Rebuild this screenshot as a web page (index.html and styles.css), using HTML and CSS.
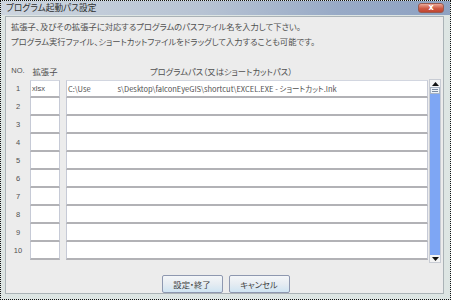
FILE: index.html
```html
<!DOCTYPE html>
<html lang="ja">
<head>
<meta charset="utf-8">
<title>プログラム起動パス設定</title>
<link rel="stylesheet" href="styles.css">
</head>
<body>
<div class="window">
  <div class="titlebar">
    <span class="title">プログラム起動パス設定</span>
    <span class="close">x</span>
  </div>
  <div class="frame">
    <div class="content">
      <p class="desc">拡張子、及びその拡張子に対応するプログラムのパスファイル名を入力して下さい。<br>プログラム実行ファイル、ショートカットファイルをドラッグして入力することも可能です。</p>
      <div class="head">
        <span class="h-no">NO.</span>
        <span class="h-ext">拡張子</span>
        <span class="h-path">プログラムパス（又はショートカットパス）</span>
      </div>
      <div class="table">
        <div class="rows">
          <div class="row"><span class="no">1</span><span class="cell ext">xlsx</span><span class="gap"></span><span class="cell path">C:\Use<span class="redact"></span>s\Desktop\falconEyeGIS\shortcut\EXCEL.EXE - ショートカット.lnk</span></div>
          <div class="row"><span class="no">2</span><span class="cell ext"></span><span class="gap"></span><span class="cell path"></span></div>
          <div class="row"><span class="no">3</span><span class="cell ext"></span><span class="gap"></span><span class="cell path"></span></div>
          <div class="row"><span class="no">4</span><span class="cell ext"></span><span class="gap"></span><span class="cell path"></span></div>
          <div class="row"><span class="no">5</span><span class="cell ext"></span><span class="gap"></span><span class="cell path"></span></div>
          <div class="row"><span class="no">6</span><span class="cell ext"></span><span class="gap"></span><span class="cell path"></span></div>
          <div class="row"><span class="no">7</span><span class="cell ext"></span><span class="gap"></span><span class="cell path"></span></div>
          <div class="row"><span class="no">8</span><span class="cell ext"></span><span class="gap"></span><span class="cell path"></span></div>
          <div class="row"><span class="no">9</span><span class="cell ext"></span><span class="gap"></span><span class="cell path"></span></div>
          <div class="row"><span class="no">10</span><span class="cell ext"></span><span class="gap"></span><span class="cell path"></span></div>
        </div>
        <div class="scrollbar">
          <div class="sb-btn"><svg width="7" height="4" viewBox="0 0 7 4"><path d="M0 4 L3.5 0 L7 4 Z" fill="#111"/></svg></div>
          <div class="sb-thumb"><i></i><i></i></div>
          <div class="sb-track"></div>
          <div class="sb-btn"><svg width="7" height="4" viewBox="0 0 7 4"><path d="M0 0 L7 0 L3.5 4 Z" fill="#111"/></svg></div>
        </div>
      </div>
      <div class="buttons">
        <button class="btn">設定・終了</button>
        <button class="btn">キャンセル</button>
      </div>
    </div>
  </div>
</div>
</body>
</html>
```
FILE: styles.css
```css
* { box-sizing: border-box; }
html, body { margin: 0; padding: 0; }
body {
  width: 451px;
  height: 300px;
  background: #ffffff;
  font-family: "Noto Sans CJK JP", "Noto Sans", sans-serif;
  font-feature-settings: "palt";
  color: #505050;
}
.window {
  width: 451px;
  height: 300px;
  border: 1px dotted #111;
  background: #dde5e3;
  display: flex;
  flex-direction: column;
}
.titlebar {
  height: 14px;
  flex: none;
  display: flex;
  align-items: center;
  padding-left: 5px;
  background: linear-gradient(to right, #cdd5df 0%, #b7c3d3 45%, #98aac6 75%, #8ea2c2 100%);
}
.title {
  font-size: 8.7px;
  line-height: 12px;
  color: #303030;
}
.close {
  margin-left: auto;
  margin-right: 6px;
  width: 26px;
  height: 10px;
  border-radius: 3px;
  background: linear-gradient(#eaa898, #cf5a44 55%, #c04530);
  border: 1px solid #9a5a50;
  color: #fff;
  font-family: "DejaVu Sans", sans-serif;
  font-size: 8px;
  font-weight: bold;
  line-height: 8px;
  text-align: center;
}
.frame {
  flex: 1;
  display: flex;
  padding: 1px 6px 5px 4px;
}
.content {
  flex: 1;
  background: #ececec;
  border: 1px solid #aab2b6;
  display: flex;
  flex-direction: column;
}
.desc {
  margin: 2px 0 0 5px;
  font-size: 8.3px;
  line-height: 15px;
  white-space: nowrap;
}
.head {
  margin-top: 14px;
  height: 17px;
  display: flex;
  align-items: center;
  font-size: 8.3px;
  line-height: 12px;
  padding-bottom: 1px;
}
.h-no {
  width: 24px;
  text-align: center;
  font-family: "Liberation Sans", sans-serif;
  font-size: 7.5px;
}
.h-ext {
  width: 30px;
  text-align: center;
}
.h-path {
  margin-left: 90px;
}
.table {
  display: flex;
  align-items: flex-start;
}
.rows {
  display: flex;
  flex-direction: column;
}
.row {
  display: flex;
  height: 18px;
}
.no {
  width: 24px;
  text-align: center;
  font-family: "Liberation Sans", sans-serif;
  font-size: 7.5px;
  line-height: 17px;
}
.cell {
  background: #ffffff;
  border-left: 1px solid #c6cad6;
  border-right: 1px solid #c6cad6;
  border-bottom: 2px solid #b2b2b6;
  font-size: 7.5px;
  line-height: 16px;
  white-space: nowrap;
  overflow: hidden;
}
.row:first-child .cell {
  border-top: 1px solid #d2d6e0;
  line-height: 15px;
}
.ext {
  width: 30px;
  padding-left: 1px;
  font-family: "Liberation Sans", sans-serif;
}
.gap { width: 6px; }
.path {
  width: 362px;
  padding-left: 1px;
}
.redact {
  display: inline-block;
  width: 27px;
}
.scrollbar {
  margin-left: 1px;
  margin-top: -1px;
  width: 12px;
  height: 184px;
  display: flex;
  flex-direction: column;
  border: 1px solid #c8ccd4;
  background: #ffffff;
}
.sb-btn {
  height: 7px;
  display: flex;
  align-items: center;
  justify-content: center;
  background: #f4f4f4;
}
.sb-thumb {
  height: 7px;
  border: 1px solid #a8b4c4;
  background: #eef2f8;
  display: flex;
  flex-direction: column;
  justify-content: center;
  align-items: center;
  gap: 1px;
}
.sb-thumb i {
  display: block;
  width: 6px;
  height: 1px;
  background: #7a8aa0;
}
.sb-track {
  flex: 1;
  background: #7ea6f4;
}
.buttons {
  margin-top: 12px;
  display: flex;
  justify-content: center;
  gap: 6px;
  padding-left: 2px;
}
.btn {
  width: 61px;
  height: 18px;
  padding: 0;
  border: 1px solid #8e98b0;
  border-radius: 2px;
  background: linear-gradient(#f4f6f8, #e6ecf2 50%, #cfe4f2);
  font-family: "Noto Sans CJK JP", sans-serif;
  font-feature-settings: "palt";
  font-size: 8.3px;
  color: #404040;
}
```
